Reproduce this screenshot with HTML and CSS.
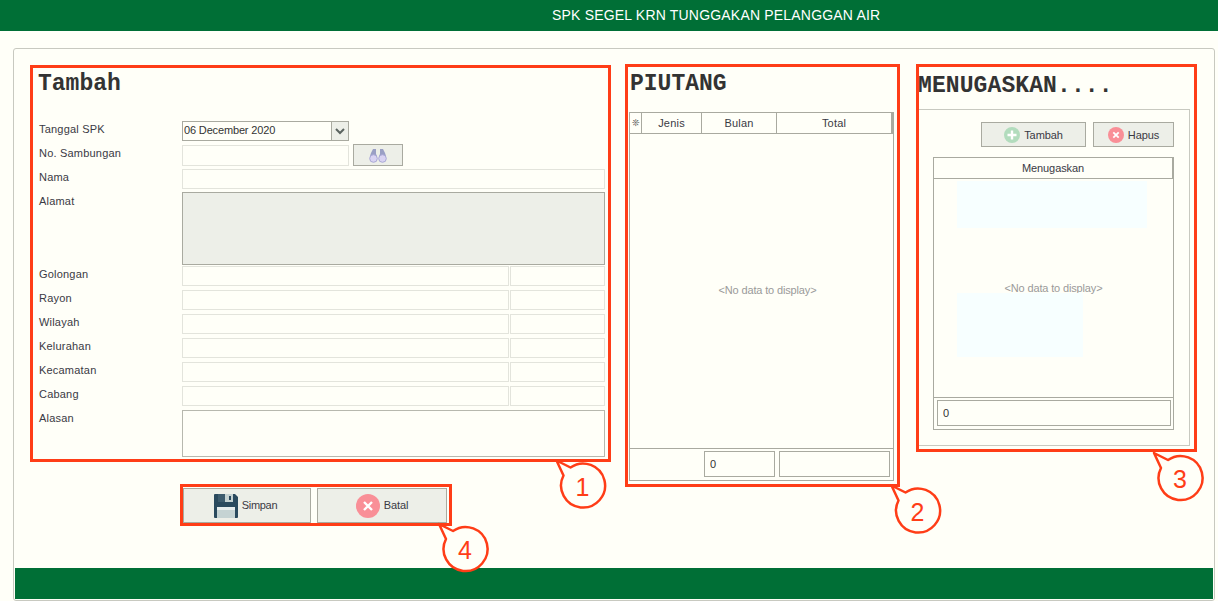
FILE: index.html
```html
<!DOCTYPE html>
<html lang="en">

<head>
    <meta charset="UTF-8">
    <title>SPK Segel</title>
    <link rel="stylesheet" href="styles.css">
</head>

<body>
    <header class="topbar">SPK SEGEL KRN TUNGGAKAN PELANGGAN AIR</header>

    <main class="panel">
        <div class="columns">
            <div class="col-form">
                <section class="box box-form">
                    <h2 class="title">Tambah</h2>
                    <form class="form">
                        <label>Tanggal SPK</label>
                        <div class="combo">
                            <input class="combo-input" type="text" value="06 December 2020">
                            <span class="combo-arrow">
                                <svg width="10" height="7" viewBox="0 0 10 7"><path d="M1 1l4 4 4-4" fill="none" stroke="#5b6460" stroke-width="2"/></svg>
                            </span>
                        </div>

                        <label>No. Sambungan</label>
                        <div class="pair pair-search">
                            <input class="field" type="text">
                            <button class="btn btn-search" type="button">
                                <svg width="18" height="15" viewBox="0 0 18 15">
                                    <path d="M4 1h3v5l1 2v3H1V8l1-3z" fill="#9a9fc4"/>
                                    <path d="M14 1h-3v5l-1 2v3h7V8l-1-3z" fill="#9a9fc4"/>
                                    <circle cx="4.500" cy="10.500" r="3.800" fill="#d9d3f2" stroke="#a9a8d6"/>
                                    <circle cx="13.500" cy="10.500" r="3.800" fill="#d9d3f2" stroke="#a9a8d6"/>
                                </svg>
                            </button>
                        </div>

                        <label>Nama</label>
                        <input class="field" type="text">

                        <label>Alamat</label>
                        <textarea class="area area-alamat" readonly></textarea>

                        <label>Golongan</label>
                        <div class="pair"><input class="field" type="text"><input class="field" type="text"></div>

                        <label>Rayon</label>
                        <div class="pair"><input class="field" type="text"><input class="field" type="text"></div>

                        <label>Wilayah</label>
                        <div class="pair"><input class="field" type="text"><input class="field" type="text"></div>

                        <label>Kelurahan</label>
                        <div class="pair"><input class="field" type="text"><input class="field" type="text"></div>

                        <label>Kecamatan</label>
                        <div class="pair"><input class="field" type="text"><input class="field" type="text"></div>

                        <label>Cabang</label>
                        <div class="pair"><input class="field" type="text"><input class="field" type="text"></div>

                        <label>Alasan</label>
                        <textarea class="area area-alasan"></textarea>
                    </form>
                </section>

                <div class="box actions">
                    <button class="btn btn-big btn-simpan" type="button">
                        <svg width="24" height="24" viewBox="0 0 24 24">
                            <path d="M1 0h20l3 3v20a1 1 0 0 1-1 1H1a1 1 0 0 1-1-1V1a1 1 0 0 1 1-1z" fill="#2a4a5e"/>
                            <rect x="4" y="0" width="15" height="8" fill="#3d5c6e"/>
                            <rect x="11" y="0" width="8" height="8" fill="#c5d2d2"/>
                            <rect x="15" y="2" width="2" height="4" fill="#2a4a5e"/>
                            <rect x="3" y="13" width="18" height="11" fill="#c5d3d3"/>
                            <rect x="3" y="13" width="18" height="3" fill="#e6eded"/>
                        </svg>
                        Simpan
                    </button>
                    <button class="btn btn-big btn-batal" type="button">
                        <svg width="24" height="24" viewBox="0 0 24 24">
                            <circle cx="12" cy="12" r="12" fill="#f98f97"/>
                            <path d="M8 8l8 8M16 8l-8 8" stroke="#fff" stroke-width="2.400"/>
                        </svg>
                        Batal
                    </button>
                </div>
            </div>

            <section class="box box-piutang">
                <h2 class="title">PIUTANG</h2>
                <div class="grid grid-piutang">
                    <div class="grid-head head-piutang">
                        <span class="star">&#10058;</span>
                        <span>Jenis</span>
                        <span>Bulan</span>
                        <span>Total</span>
                    </div>
                    <div class="grid-body body-piutang">&lt;No data to display&gt;</div>
                    <div class="grid-foot foot-piutang">
                        <span></span>
                        <input class="total" type="text" value="0">
                        <input class="total" type="text">
                    </div>
                </div>
            </section>

            <section class="box box-tugas">
                <h2 class="title title-tugas">MENUGASKAN....</h2>
                <div class="fieldset">
                    <div class="toolbar">
                        <button class="btn btn-tambah" type="button">
                            <svg width="16" height="16" viewBox="0 0 16 16">
                                <circle cx="8" cy="8" r="8" fill="#b2dcbd"/>
                                <path d="M8 3.500v9M3.500 8h9" stroke="#fff" stroke-width="2.400"/>
                            </svg>
                            Tambah
                        </button>
                        <button class="btn btn-hapus" type="button">
                            <svg width="16" height="16" viewBox="0 0 16 16">
                                <circle cx="8" cy="8" r="8" fill="#f98f97"/>
                                <path d="M5.300 5.300l5.400 5.400M10.700 5.300l-5.400 5.400" stroke="#fff" stroke-width="1.800"/>
                            </svg>
                            Hapus
                        </button>
                    </div>
                    <div class="grid grid-tugas">
                        <div class="grid-head head-tugas"><span>Menugaskan</span></div>
                        <div class="grid-body">
                            <div class="tint tint-top"></div>
                            &lt;No data to display&gt;
                            <div class="tint tint-bottom"></div>
                        </div>
                        <div class="grid-foot foot-tugas">
                            <input class="total" type="text" value="0">
                        </div>
                    </div>
                </div>
            </section>
        </div>

        <footer class="bottombar"></footer>
    </main>

    <!-- numbered callouts drawn over the page -->
    <svg class="callouts" width="1218" height="601" viewBox="0 0 1218 601">
        <g class="callout">
            <path d="M556.500 460.500l14 7a22 22 0 1 1-7 8z"/>
            <text x="582.500" y="495.500">1</text>
        </g>
        <g class="callout">
            <path d="M891.500 485.500l14 7a22 22 0 1 1-7 8z"/>
            <text x="917.500" y="520.500">2</text>
        </g>
        <g class="callout">
            <path d="M1154 453l14 7a22 22 0 1 1-7 8z"/>
            <text x="1180" y="488">3</text>
        </g>
        <g class="callout">
            <path d="M439 524l14 7a22 22 0 1 1-7 8z"/>
            <text x="465" y="559">4</text>
        </g>
    </svg>
</body>

</html>
```

FILE: styles.css
```css
* {
    box-sizing: border-box;
}

body {
    margin: 0;
    height: 601px;
    overflow: hidden;
    background-color: #fffff8;
    font-family: "Liberation Sans", Arial, sans-serif;
    font-size: 11px;
    color: #3a3a44;
}

.topbar {
    height: 31px;
    padding-left: 552px;
    background-color: #006f36;
    color: #fff;
    font-size: 14px;
    letter-spacing: 0.19px;
    line-height: 30px;
}

.panel {
    display: flex;
    flex-direction: column;
    width: 1202px;
    height: 553px;
    margin: 17px 0 0 13px;
    padding: 0 1px 1px;
    border: 1px solid #c8c9c0;
    border-radius: 3px;
}

.columns {
    display: flex;
    align-items: flex-start;
    padding: 15px 0 0 15px;
}

.bottombar {
    height: 31px;
    margin-top: auto;
    background-color: #006f36;
}

.box {
    border: 3px solid #ff3d17;
}

.title {
    margin: 0;
    font-family: "Liberation Mono", "Courier New", monospace;
    font-size: 23px;
    font-weight: bold;
    line-height: 26px;
    color: #333;
}

/* form column */
.col-form {
    width: 581px;
    margin: 1px 14px 0 0;
}

.box-form {
    height: 397px;
    padding: 3px 3px 0 5px;
}

.form {
    display: grid;
    grid-template-columns: 144px 1fr;
    grid-template-rows: 20px 20px 20px 69px;
    grid-auto-rows: 20px;
    row-gap: 4px;
    margin-top: 24px;
}

.form label {
    padding: 2px 0 0 1px;
    letter-spacing: 0.2px;
}

.field,
.combo-input,
.total,
.area {
    display: block;
    width: 100%;
    height: 100%;
    margin: 0;
    padding: 0 3px;
    border-radius: 0;
    background-color: #fffff8;
    font: inherit;
    color: #333;
    outline: none;
    resize: none;
}

.field {
    border: 1px solid #e3e4dc;
}

.combo {
    display: flex;
    width: 167px;
    border: 1px solid #a9aaa0;
}

.combo-input {
    flex: 1;
    min-width: 0;
    padding: 0 0 2px 1px;
    border: 0;
    letter-spacing: -0.15px;
}

.combo-arrow {
    display: flex;
    align-items: center;
    justify-content: center;
    width: 17px;
    border-left: 1px solid #a9aaa0;
    background-color: #edefe8;
}

.pair {
    display: grid;
    grid-template-columns: 327px 1fr;
    column-gap: 1px;
}

.pair-search {
    grid-template-columns: 167px 50px;
    column-gap: 4px;
}

.area {
    border: 1px solid #a9aaa0;
}

.area-alamat {
    height: 73px;
    margin-top: -1px;
    background-color: #edefe8;
}

.area-alasan {
    height: 47px;
    border-color: #b7b8ae;
}

.btn {
    display: flex;
    align-items: center;
    justify-content: center;
    margin: 0;
    padding: 0;
    border: 1px solid #a9aaa0;
    background-color: #edefe8;
    font: inherit;
    color: inherit;
    letter-spacing: -0.1px;
}

.btn-search {
    height: 22px;
    margin-top: -1px;
}

.actions {
    display: flex;
    column-gap: 6px;
    width: 272px;
    height: 42px;
    margin: 22px 0 0 150px;
    padding: 1px 2px 0 0;
}

.btn-big {
    column-gap: 4px;
    height: 35px;
    padding-bottom: 1px;
}

.btn-big svg {
    margin-top: 1px;
}

.btn-simpan {
    width: 128px;
    padding-right: 3px;
    letter-spacing: -0.3px;
}

.btn-batal {
    width: 130px;
}

/* piutang column */
.box-piutang {
    width: 275px;
    height: 423px;
    margin-right: 16px;
    padding: 4px 3px 0 1px;
}

.box-piutang .title {
    padding-left: 1px;
}

.grid {
    display: flex;
    flex-direction: column;
    border: 1px solid #a9aaa0;
}

.grid-piutang {
    height: 369px;
    margin-top: 15px;
}

.grid-head {
    display: grid;
    flex: none;
    height: 21px;
    border-bottom: 1px solid #a9aaa0;
    border-right: 2px solid #a9aaa0;
    line-height: 20px;
    text-align: center;
    letter-spacing: 0.2px;
}

.head-piutang {
    grid-template-columns: 11px 60px 75px 1fr;
}

.head-piutang span + span {
    border-left: 1px solid #a9aaa0;
}

.star {
    font-family: "DejaVu Sans", sans-serif;
    font-size: 9px;
    color: #555;
}

.grid-body {
    position: relative;
    display: flex;
    flex: 1;
    align-items: center;
    justify-content: center;
    color: #9a9a9a;
    letter-spacing: -0.15px;
}

.body-piutang {
    padding: 0 0 2px 12px;
}

.grid-foot {
    flex: none;
    border-top: 1px solid #a9aaa0;
}

.foot-piutang {
    display: grid;
    grid-template-columns: 70px 71px 111px;
    column-gap: 4px;
    height: 32px;
    padding: 2px 3px 3px 0;
}

.total {
    padding: 0 5px;
    border: 1px solid #a9aaa0;
}

/* menugaskan column */
.box-tugas {
    width: 281px;
    height: 388px;
    padding: 4px 3px 0 0;
}

.title-tugas {
    margin-left: -1px;
    letter-spacing: 0.1px;
    line-height: 30px;
}

.fieldset {
    height: 337px;
    margin-top: 8px;
    margin-right: 1px;
    padding: 12px 15px 0 14px;
    border: 1px solid #c8c9c0;
    border-left: 0;
}

.toolbar {
    display: flex;
    justify-content: flex-end;
    column-gap: 7px;
}

.btn-tambah,
.btn-hapus {
    column-gap: 4px;
    height: 25px;
}

.btn-tambah {
    width: 105px;
}

.btn-hapus {
    width: 81px;
}

.grid-tugas {
    height: 273px;
    margin-top: 10px;
}

.head-tugas {
    border-right-width: 1px;
    letter-spacing: -0.1px;
}

.tint {
    position: absolute;
    background-color: #f7ffff;
}

.tint-top {
    top: 2px;
    left: 23px;
    width: 190px;
    height: 47px;
}

.tint-bottom {
    top: 114px;
    left: 23px;
    width: 126px;
    height: 64px;
}

.foot-tugas {
    height: 32px;
    padding: 2px 2px 3px 3px;
}

/* callouts */
.callouts {
    position: absolute;
    top: 0;
    left: 0;
    pointer-events: none;
}

.callout path {
    fill: #fffff8;
    stroke: #ff3d17;
    stroke-width: 2.500;
    stroke-linejoin: round;
}

.callout text {
    fill: #ff3d17;
    font-family: "Liberation Sans", Arial, sans-serif;
    font-size: 25px;
    text-anchor: middle;
}
```
